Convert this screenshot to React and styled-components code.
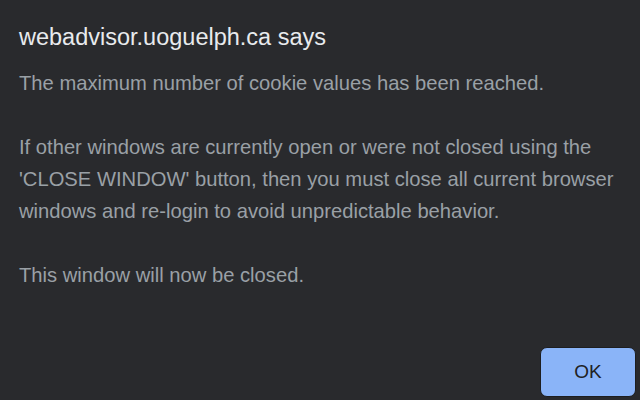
import React from "react";
import styled, { createGlobalStyle } from "styled-components";

const GlobalStyle = createGlobalStyle`
  html, body {
    margin: 0;
    padding: 0;
    background: #292a2d;
  }
  * {
    box-sizing: border-box;
  }
`;

const message = `The maximum number of cookie values has been reached.

If other windows are currently open or were not closed using the
'CLOSE WINDOW' button, then you must close all current browser
windows and re-login to avoid unpredictable behavior.

This window will now be closed.`;

function App() {
  return (
    <>
      <GlobalStyle />
      <StDialog>
        <StTitle>webadvisor.uoguelph.ca says</StTitle>
        <StMessage>{message}</StMessage>
        <StFooter>
          <StOkBtn type="button">OK</StOkBtn>
        </StFooter>
      </StDialog>
    </>
  );
}

export default App;

const StDialog = styled.div`
  width: 640px;
  height: 400px;
  background-color: #292a2d;
  display: flex;
  flex-direction: column;
  padding: 23px 4px 3px 19px;
  font-family: "Liberation Sans", Arial, sans-serif;
  overflow: hidden;
`;

const StTitle = styled.h1`
  margin: 0 0 16px;
  font-size: 23.5px;
  font-weight: 400;
  line-height: 28px;
  color: #e8eaed;
`;

const StMessage = styled.div`
  flex: 1;
  white-space: pre-wrap;
  font-size: 20.2px;
  line-height: 32px;
  color: #9aa0a6;
`;

const StFooter = styled.div`
  display: flex;
  justify-content: flex-end;
`;

const StOkBtn = styled.button`
  width: 96px;
  height: 50px;
  border: 1px solid #1d1e20;
  border-radius: 7px;
  background-color: #8ab4f8;
  color: #202124;
  font-family: "Liberation Sans", Arial, sans-serif;
  font-size: 19px;
  cursor: pointer;
`;
